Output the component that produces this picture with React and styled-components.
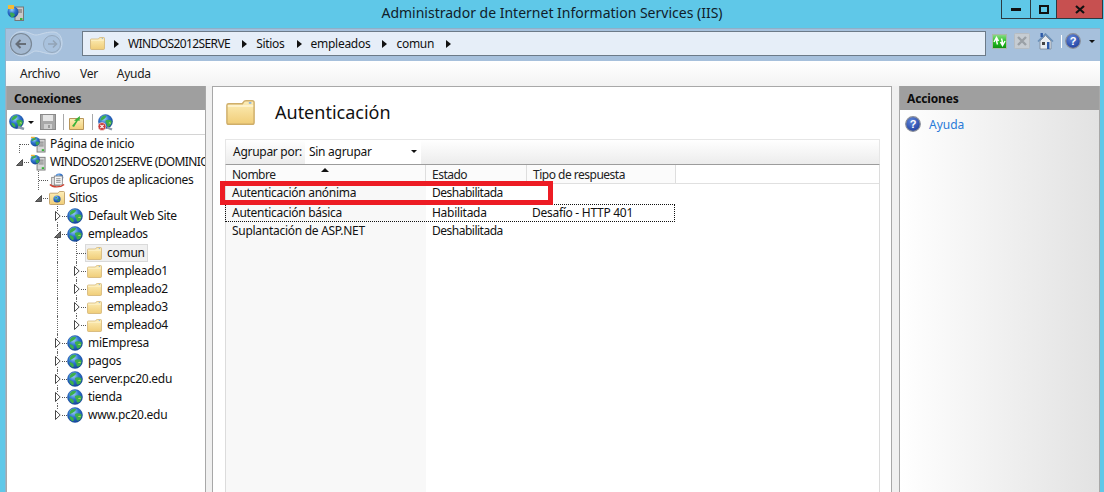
import React from 'react';
import styled, { createGlobalStyle } from 'styled-components';

const Global = createGlobalStyle`
  html, body { margin: 0; height: 492px; overflow: hidden; background: #5fc8e8; }
  #root { height: 492px; }
  * { box-sizing: border-box; }
  body { font-family: "Noto Sans", "Open Sans", sans-serif; font-size: 12px; letter-spacing: -.28px; color: #1a1a1a; }
`;

const Page = styled.div`display: flex; flex-direction: column; height: 492px; width: 1104px; overflow: hidden;`;
const TitleBar = styled.header`
  height: 28px; flex: none; display: flex; align-items: flex-start; position: relative;
  padding-left: 7px; padding-top: 4px;
`;
const TitleText = styled.div`
  position: absolute; left: 0; right: 0; top: 3px; text-align: center; font-size: 14px; line-height: 20px; color: #10202a; letter-spacing: 0;
`;
const WinButtons = styled.div`
  position: absolute; top: 0; left: 1001px; display: flex; height: 19px;
  border: 1px solid #2b3a42; border-top: 0;
`;
const WinBtn = styled.div`
  width: ${p => p.$w}px; height: 18px; display: flex; align-items: center; justify-content: center;
  background: ${p => p.$bg || 'transparent'}; border-left: ${p => p.$first ? 0 : '1px solid #2b3a42'};
`;
const Window = styled.div`
  flex: 1; min-height: 0; margin-left: 5px; width: 1095px; display: flex; flex-direction: column;
  background: #f0f0f0; border-left: 1px solid #8fb4cc;
`;
const NavBar = styled.div`
  height: 33px; flex: none; background: #a6c0dc; display: flex; align-items: flex-start; padding: 0 0 0 3px; border-top: 1px solid #8fb0c8;
`;
const Capsule = styled.div`
  width: 54px; height: 27px; flex: none; margin: 1px 19px 0 0; display: flex; align-items: center;
`;
const Address = styled.div`
  width: 904px; height: 25px; flex: none; margin-top: 2px; background: #e6eef8; border: 1px solid #6c7a88; display: flex; align-items: center; padding-left: 7px; color: #111;
`;
const Crumb = styled.span`margin-right: 12px; line-height: 16px; letter-spacing: ${p => p.$tight ? '-.6px' : 'inherit'};`;
const CrumbArrow = styled.span`
  width: 0; height: 0; border-left: 5px solid #111; border-top: 4px solid transparent; border-bottom: 4px solid transparent; margin-right: 9px; margin-left: ${p => p.$ml || 0}px;
`;
const NavIcons = styled.div`display: flex; align-items: center; margin: 4px 0 0 6px; height: 16px;`;
const NavGap = styled.span`width: 7px; flex: none;`;
const NavSep = styled.span`width: 1px; height: 13px; background: #fff; margin: 0 3px 0 7px;`;
const Caret = styled.span`
  width: 0; height: 0; flex: none; border-top: 3px solid #111; border-left: 3px solid transparent; border-right: 3px solid transparent; margin-left: ${p => p.$ml || 0}px;
`;
const MenuBar = styled.nav`
  height: 25px; flex: none; background: linear-gradient(#ffffff, #f3f3f3); display: flex; align-items: center; padding-left: 14px; gap: 19px;
`;
const MenuItem = styled.span`color: #1c1c1c; min-width: ${p => p.$w || 0}px;`;
const Panes = styled.div`flex: 1; min-height: 0; display: flex; padding-right: 1px;`;
const Side = styled.aside`
  width: ${p => p.$w}px; flex: none; margin-right: ${p => p.$mr || 0}px; display: flex; flex-direction: column; border-left: 1px solid #a8a8a8; border-right: 1px solid #a8a8a8;
  background: ${p => p.$bg || '#fff'};
`;
const PaneHead = styled.h2`
  margin: 0; height: 24px; flex: none; background: #9f9f9f; font-size: 12px; font-weight: 700; line-height: 26px; padding-left: 7px; color: #0c0c0c; letter-spacing: -.15px;
`;
const SideTools = styled.div`
  height: 25px; flex: none; display: flex; align-items: center; padding-left: 2px; border-bottom: 1px solid #d4d4d4;
`;
const ToolGap = styled.span`width: 6px; flex: none;`;
const ToolSep = styled.span`width: 1px; height: 16px; background: #a9a9a9; margin: 0 ${p => p.$r}px 0 ${p => p.$l}px;`;
const Tree = styled.div`display: flex; flex-direction: column; flex: 1;`;
const Row = styled.div`
  height: 18px; flex: none; display: flex; align-items: center; position: relative; padding-left: ${p => 3 + p.$d * 19}px;
  margin-top: ${p => p.$mt || 0}px;
`;
const Slot = styled.span`width: 19px; flex: none; height: 18px; position: relative; display: flex; align-items: center; justify-content: center;`;
const HDots = styled.span`position: absolute; left: 50%; right: 0; top: 9px; border-top: 1px dotted #555;`;
const Guide = styled.span`
  position: absolute; left: ${p => p.$x}px; top: ${p => p.$t}px; bottom: ${p => p.$b}px; border-left: 1px dotted #666;
`;
const ArrowBox = styled.span`position: relative; z-index: 1; display: flex; background: #fff;`;
const RowIcon = styled.span`width: 17px; height: 17px; flex: none; display: flex; align-items: center; justify-content: flex-start; padding-left: ${p => p.$flush ? 0 : 1}px; position: relative; z-index: 1;`;
const RowText = styled.span`margin-left: 4px; white-space: nowrap; line-height: 16px; color: #111; position: relative; letter-spacing: ${p => p.$tight ? '-.6px' : 'inherit'};`;
const SelBox = styled.span`
  position: absolute; left: 78px; top: 0; width: 63px; height: 18px; background: #f0f0f0; border: 1px solid #dadada;
`;
const TreeClip = styled.div`overflow: hidden; flex: 1; display: flex; flex-direction: column;`;
const Center = styled.main`
  width: 680px; flex: none; margin-right: 7px; background: #fff; border: 1px solid #a8a8a8; border-bottom: 0; padding: 0 10px 0 12px; display: flex; flex-direction: column; position: relative;
`;
const Heading = styled.div`height: 52px; flex: none; display: flex; align-items: center; padding: 0 0 2px 1px; gap: 20px;`;
const HeadingText = styled.h1`margin: 0; font-size: 18px; font-weight: 400; line-height: 24px; color: #111; letter-spacing: 0;`;
const Filter = styled.div`
  height: 26px; flex: none; background: linear-gradient(#fff, #ececec); border: 1px solid #e6e6e6; border-bottom: 1px solid #9c9c9c; display: flex; align-items: center; padding: 0 0 0 7px; width: 655px;
`;
const FilterLabel = styled.span`color: #111; width: 72px; flex: none; white-space: nowrap; margin-top: -2px;`;
const Drop = styled.div`
  width: 116px; height: 24px; background: #fff; display: flex; align-items: center; justify-content: space-between; padding: 0 4px 2px 4px; color: #111;
`;
const Grid = styled.div`flex: 1; width: 655px; border-left: 1px solid #dcdcdc; border-right: 1px solid #dcdcdc; position: relative; background: linear-gradient(90deg, #f8f8f8 200px, #fff 200px);`;
const HeadRow = styled.div`display: flex; height: 19px; border-bottom: 1px solid #e0e0e0; background: #fff;`;
const HeadCell = styled.div`
  width: ${p => p.$w}px; flex: none; background: #fbfbfb; border-right: 1px solid #dedede; padding: 2px 0 0 6px; line-height: 16px; color: #222; position: relative; letter-spacing: -.5px;
`;
const SortUp = styled.span`
  position: absolute; left: 95px; top: 3px; border-bottom: 4px solid #111; border-left: 4px solid transparent; border-right: 4px solid transparent;
`;
const DataRow = styled.div`
  display: flex; height: ${p => p.$h}px; width: 450px; align-items: center; color: #111;
  border: 1px dotted ${p => p.$focus ? '#111' : 'transparent'};
  margin-left: -1px; padding-bottom: ${p => p.$pb || 0}px;
`;
const Cell = styled.div`width: ${p => p.$w}px; flex: none; padding-left: 6px; line-height: 16px; letter-spacing: ${p => p.$tight ? '-.5px' : 'inherit'};`;
const Highlight = styled.div`
  position: absolute; left: -6px; top: 16px; width: 333px; height: 24px; border: 5px solid #ed1c24; z-index: 3;
`;
const ActionRow = styled.div`display: flex; align-items: center; height: 28px; padding-left: 5px; gap: 8px; color: #2a7ad8; letter-spacing: 0;`;

const Defs = () => (
  <svg width="0" height="0" style={{ position: 'absolute' }}>
    <defs>
      <linearGradient id="fold" x1="0" y1="0" x2="0" y2="1">
        <stop offset="0" stopColor="#fdeeb8" /><stop offset="1" stopColor="#f0cd78" />
      </linearGradient>
      <radialGradient id="glob" cx=".4" cy=".3" r=".75">
        <stop offset="0" stopColor="#9fd0f8" /><stop offset=".45" stopColor="#2f74d0" /><stop offset="1" stopColor="#123f92" />
      </radialGradient>
      <radialGradient id="helpG" cx=".4" cy=".3" r=".8">
        <stop offset="0" stopColor="#5f86da" /><stop offset="1" stopColor="#1b3a9a" />
      </radialGradient>
      <linearGradient id="grn" x1="0" y1="0" x2="0" y2="1">
        <stop offset="0" stopColor="#8fdc8c" /><stop offset=".5" stopColor="#27c222" /><stop offset="1" stopColor="#0d8f10" />
      </linearGradient>
    </defs>
  </svg>
);

const Folder = ({ s = 15, h = 13 }) => (
  <svg width={s} height={h} viewBox="0 0 16 14">
    <path d="M.5 3V12.5Q.5 13.5 1.5 13.5H14.5Q15.5 13.5 15.5 12.5V1.5Q15.5.5 14.5.5H11Q10 .5 9.5 1.5L9 2.2H1.5Q.5 2.2.5 3Z" fill="url(#fold)" stroke="#cfae6a" strokeWidth=".8" />
    <path d="M1 3.4H15" stroke="#fff6d8" strokeWidth=".8" />
    <rect x="12.6" y="1.2" width="1.4" height="1" fill="#8fb6e0" />
  </svg>
);
const Land = () => (
  <path d="M4.5 2.6C6 1.6 8 1.4 9 2.2 9 3.6 7.6 4 7 5 6 6 4.4 6 3 7.2 2.2 6 3.2 3.6 4.5 2.6ZM8 7C9.6 5.8 12.4 6 14.6 7.4 15 10 13.4 12.6 11.4 13.6 10 14 9.4 12.4 9.4 10.8 8.8 9.6 7.6 8.4 8 7ZM2.4 9.4C4 9 5.8 10 6.6 11.6 7 13.2 6.6 14.4 5.8 14.4 3.8 13.4 2.6 11.4 2.4 9.4Z" fill="#3cb04a" />
);
const Globe = ({ s = 16 }) => (
  <svg width={s} height={s} viewBox="0 0 16 16">
    <circle cx="8" cy="8" r="7.6" fill="url(#glob)" />
    <Land />
    <path d="M11.5 9.5C12.5 9.2 13.4 9.4 13.6 10" stroke="#e4e27a" strokeWidth="1" fill="none" />
    <circle cx="8" cy="8" r="7.4" fill="none" stroke="#164a9c" strokeWidth=".5" />
  </svg>
);
const ServerGlobe = () => (
  <svg width="17" height="17" viewBox="0 0 17 17">
    <rect x="7.5" y="3" width="8.5" height="13.5" fill="#d6d6d6" stroke="#7c7c7c" />
    <path d="M9 6H14.5M9 8H14.5M9 10H14.5" stroke="#7c7c7c" />
    <rect x="12.5" y="13.5" width="2.5" height="2" fill="#38b33a" />
    <circle cx="5.5" cy="5.5" r="5" fill="url(#glob)" />
    <path d="M3 2C5 .8 7 1.5 7 2.5 6 4 4 4 2 5 1 4 2 3 3 2ZM6 5.5C7.5 5 9 5.5 10 6.5 9.5 8.5 8 10 7 9.5 6.5 8 5.5 7 6 5.5Z" fill="#3aa655" />
    <path d="M1 1H5" stroke="#f2b632" strokeWidth="1.4" />
  </svg>
);
const AppPool = () => (
  <svg width="18" height="17" viewBox="0 0 18 17">
    <circle cx="11.5" cy="5" r="4.5" fill="url(#glob)" />
    <rect x="3" y="5" width="9" height="9" fill="#e8e8e8" stroke="#8a8a8a" />
    <rect x="6" y="3.5" width="9" height="10" fill="#f6f6f6" stroke="#8a8a8a" />
    <path d="M8 6.5H13M8 8.5H13M8 10.5H13" stroke="#8a8a8a" />
    <path d="M1 13C4 16.5 13 16.5 17 13" fill="none" stroke="#d04030" strokeWidth="1.5" />
  </svg>
);
const SitesFolder = () => (
  <svg width="16" height="14" viewBox="0 0 16 14">
    <path d="M.5 3V12.5Q.5 13.5 1.5 13.5H14.5Q15.5 13.5 15.5 12.5V1.5Q15.5.5 14.5.5H11Q10 .5 9.5 1.5L9 2.2H1.5Q.5 2.2.5 3Z" fill="url(#fold)" stroke="#b8965a" strokeWidth=".8" />
    <circle cx="8" cy="8" r="3.6" fill="url(#glob)" />
    <path d="M6 6.5C7 5.5 8.5 6 8 7 7 8 6 7.5 6 6.5ZM8.5 8.5C9.5 8 11 8.5 10.5 9.8 9.5 11 8.5 10 8.5 8.5Z" fill="#3aa655" />
  </svg>
);
const OpenArrow = () => (
  <svg width="7" height="7" viewBox="0 0 7 7"><path d="M6.5.5V6.5H.5Z" fill="#6a6a6a" stroke="#333" strokeWidth=".8" /></svg>
);
const ClosedArrow = () => (
  <svg width="6" height="10" viewBox="0 0 6 10"><path d="M.5.5 5.2 5 .5 9.5Z" fill="#fff" stroke="#333" strokeWidth=".9" /></svg>
);
const Help = ({ s = 16 }) => (
  <svg width={s} height={s} viewBox="0 0 16 16">
    <circle cx="8" cy="8" r="7.3" fill="url(#helpG)" stroke="#8b8f99" strokeWidth="1.2" />
    <text x="8" y="12" textAnchor="middle" fontSize="11" fontWeight="700" fontFamily="Liberation Sans, sans-serif" fill="#fff">?</text>
  </svg>
);
const Back = () => (
  <svg width="54" height="27" viewBox="0 0 54 27">
    <path d="M13 1.5C20 1.5 23 5 27 5 31 5 36 2 44 2 50 2 53 7 53 13 53 20 49 24 43 24 36 24 32 21 27 21 23 21 20 26 13 26 6 26 1 20 1 13.5 1 7 6 1.5 13 1.5Z" fill="#b0c8e2" stroke="#c8d8ea" />
    <circle cx="12" cy="14" r="10.5" fill="#a4b9d1" stroke="#7a8896" strokeWidth="1.2" />
    <path d="M17 14H8M11.5 10 7.5 14 11.5 18" fill="none" stroke="#666e78" strokeWidth="2" />
    <circle cx="43" cy="14" r="8.5" fill="#a9c2dd" stroke="#95a8bc" />
    <path d="M39 14H47M44 10.5 47.5 14 44 17.5" fill="none" stroke="#93a4b6" strokeWidth="1.6" />
  </svg>
);
const Refresh = () => (
  <svg width="15" height="15" viewBox="0 0 15 15">
    <rect x=".5" y=".5" width="14" height="14" fill="url(#grn)" stroke="#a8b8a8" />
    <path d="M2 8 4.5 3.5 6.5 7M13 7 10.5 11.5 8.5 8M4.5 4.5Q4.5 8 5.5 10.5M10.5 10.5Q10.5 7 9.5 4.5" fill="none" stroke="#fff" strokeWidth="1.5" />
  </svg>
);
const Stop = () => (
  <svg width="16" height="16" viewBox="0 0 16 16">
    <rect x=".5" y=".5" width="15" height="15" rx="1" fill="#c6ccd2" stroke="#b6bcc2" />
    <path d="M4 4 12 12M12 4 4 12" stroke="#9aa0a6" strokeWidth="2.4" />
  </svg>
);
const Home = () => (
  <svg width="17" height="17" viewBox="0 0 17 17">
    <path d="M3 8 8.5 2.5 14 8V16H3Z" fill="#e8ecf0" stroke="#7c8692" strokeWidth=".8" />
    <path d="M1 8.5 8.5 1 16 8.5" fill="none" stroke="#6a8fb8" strokeWidth="1.6" />
    <rect x="3.5" y="0" width="2.4" height="4" fill="#2d5aa8" />
    <rect x="5" y="9" width="3" height="3" fill="#444" />
    <rect x="10" y="9" width="2.5" height="7" fill="#2d5aa8" />
  </svg>
);
const SaveIcon = () => (
  <svg width="16" height="16" viewBox="0 0 16 16">
    <rect x=".5" y=".5" width="15" height="15" fill="#a8a8a8" stroke="#8a8a8a" />
    <rect x="3" y="1" width="10" height="6" fill="#e6e6e6" />
    <rect x="4" y="10" width="8" height="5" fill="#cfcfcf" />
    <rect x="8" y="11" width="2" height="3" fill="#9a9a9a" />
  </svg>
);
const UpFolder = () => (
  <svg width="15" height="15" viewBox="0 0 15 15">
    <path d="M.5 3.5H14.5V14.5H.5Z" fill="url(#fold)" stroke="#b8965a" />
    <path d="M3 11 7 6 5 5.5 11 1 10.5 6 9 5.5 5 12Z" fill="#3bb23b" />
  </svg>
);
const GlobeX = () => (
  <svg width="17" height="17" viewBox="0 0 17 17">
    <g transform="translate(1 0)"><Globe s={15} /></g>
    <path d="M10 13.5 15 15.5" stroke="#8a9aaa" strokeWidth="2.4" />
    <circle cx="5" cy="12.5" r="4" fill="#c73a3a" stroke="#fff" strokeWidth=".6" />
    <path d="M3.4 10.9 6.6 14.1M6.6 10.9 3.4 14.1" stroke="#fff" strokeWidth="1.2" />
  </svg>
);
const GlobeTool = () => (
  <svg width="16" height="16" viewBox="0 0 16 16">
    <Globe s={15} />
    <path d="M9 13 15 15" stroke="#8a9aaa" strokeWidth="2.4" />
  </svg>
);
const TitleIcon = () => (
  <svg width="17" height="17" viewBox="0 0 17 17">
    <rect x="8" y="3" width="8.5" height="13.5" fill="#c8c8c8" stroke="#777" />
    <path d="M10 6H15M10 8H15" stroke="#666" />
    <rect x="13" y="14" width="2.5" height="2" fill="#38b33a" />
    <circle cx="6" cy="8" r="5.5" fill="url(#glob)" />
    <path d="M1 1H7V5H1Z" fill="#f3bb38" />
    <path d="M3 9C5 8 7 9 8 11 7 13 5 13.5 4 13 3.5 12 3 10 3 9Z" fill="#3aa655" />
  </svg>
);

const rows = [
  { d: 0, icon: <ServerGlobe />, text: 'Página de inicio', dots: true },
  { d: 0, icon: <ServerGlobe />, text: 'WINDOS2012SERVE (DOMINIO', open: true, tight: true },
  { d: 1, icon: <AppPool />, text: 'Grupos de aplicaciones', dots: true },
  { d: 1, icon: <SitesFolder />, text: 'Sitios', open: true },
  { d: 2, icon: <Globe />, text: 'Default Web Site', closed: true, flush: true },
  { d: 2, icon: <Globe />, text: 'empleados', open: true, flush: true },
  { d: 3, icon: <Folder />, text: 'comun', dots: true, sel: true, mt: 1 },
  { d: 3, icon: <Folder />, text: 'empleado1', closed: true },
  { d: 3, icon: <Folder />, text: 'empleado2', closed: true },
  { d: 3, icon: <Folder />, text: 'empleado3', closed: true },
  { d: 3, icon: <Folder />, text: 'empleado4', closed: true },
  { d: 2, icon: <Globe />, text: 'miEmpresa', closed: true, flush: true },
  { d: 2, icon: <Globe />, text: 'pagos', closed: true, flush: true },
  { d: 2, icon: <Globe />, text: 'server.pc20.edu', closed: true, flush: true },
  { d: 2, icon: <Globe />, text: 'tienda', closed: true, flush: true },
  { d: 2, icon: <Globe />, text: 'www.pc20.edu', closed: true, flush: true },
];

export default function App() {
  return (
    <Page>
      <Global />
      <Defs />
      <TitleBar>
        <TitleIcon />
        <TitleText>Administrador de Internet Information Services (IIS)</TitleText>
        <WinButtons>
          <WinBtn $w={28} $first><svg width="10" height="4"><rect width="10" height="3" y="1" fill="#111" /></svg></WinBtn>
          <WinBtn $w={26}><svg width="10" height="9"><rect x="1" y="1" width="8" height="7" fill="none" stroke="#111" strokeWidth="2" /></svg></WinBtn>
          <WinBtn $w={46} $bg="#c75050"><svg width="10" height="9" viewBox="0 0 10 9"><path d="M1 1 9 8M9 1 1 8" stroke="#111" strokeWidth="2.2" /></svg></WinBtn>
        </WinButtons>
      </TitleBar>
      <Window>
        <NavBar>
          <Capsule><Back /></Capsule>
          <Address>
            <Folder />
            <CrumbArrow $ml={9} />
            <Crumb $tight>WINDOS2012SERVE</Crumb>
            <CrumbArrow />
            <Crumb>Sitios</Crumb>
            <CrumbArrow />
            <Crumb>empleados</Crumb>
            <CrumbArrow />
            <Crumb>comun</Crumb>
            <CrumbArrow />
          </Address>
          <NavIcons>
            <Refresh />
            <NavGap />
            <Stop />
            <NavGap />
            <Home />
            <NavSep />
            <Help />
            <Caret $ml={8} />
          </NavIcons>
        </NavBar>
        <MenuBar>
          <MenuItem $w={41}>Archivo</MenuItem>
          <MenuItem>Ver</MenuItem>
          <MenuItem>Ayuda</MenuItem>
        </MenuBar>
        <Panes>
          <Side $w={200} $mr={6}>
            <PaneHead>Conexiones</PaneHead>
            <SideTools>
              <GlobeTool />
              <Caret $ml={3} />
              <ToolGap />
              <SaveIcon />
              <ToolSep $l={7} $r={5} />
              <UpFolder />
              <ToolSep $l={8} $r={4} />
              <GlobeX />
            </SideTools>
            <TreeClip>
              <Tree>
                {rows.map((r, i) => (
                  <Row key={i} $d={r.d} $mt={r.mt}>
                    {r.sel && <SelBox />}
                    {i === 0 && <Guide $x={12} $t={9} $b={0} />}
                    {i === 2 && <Guide $x={31} $t={-8} $b={-1} />}
                    {i >= 4 && <Guide $x={50} $t={i === 4 ? -8 : 0} $b={i === 15 ? 9 : 0} />}
                    {i >= 6 && i <= 10 && <Guide $x={69} $t={i === 6 ? -8 : 0} $b={i === 10 ? 9 : 0} />}
                    <Slot>
                      {(r.dots || r.closed || r.open) && <HDots />}
                      {r.open && <ArrowBox><OpenArrow /></ArrowBox>}
                      {r.closed && <ArrowBox><ClosedArrow /></ArrowBox>}
                    </Slot>
                    <RowIcon $flush={r.flush}>{r.icon}</RowIcon>
                    <RowText $tight={r.tight}>{r.text}</RowText>
                  </Row>
                ))}
              </Tree>
            </TreeClip>
          </Side>
          <Center>
            <Heading>
              <Folder s={29} h={27} />
              <HeadingText>Autenticación</HeadingText>
            </Heading>
            <Filter>
              <FilterLabel>Agrupar por:</FilterLabel>
              <Drop>Sin agrupar<Caret /></Drop>
            </Filter>
            <Grid>
              <HeadRow>
                <HeadCell $w={200}>Nombre<SortUp /></HeadCell>
                <HeadCell $w={101}>Estado</HeadCell>
                <HeadCell $w={149}>Tipo de respuesta</HeadCell>
              </HeadRow>
              <DataRow $h={20} $pb={2}><Cell $w={200}>Autenticación anónima</Cell><Cell $w={100} $tight>Deshabilitada</Cell></DataRow>
              <DataRow $h={18} $pb={1} $focus><Cell $w={200}>Autenticación básica</Cell><Cell $w={100}>Habilitada</Cell><Cell $w={148}>Desafío - HTTP 401</Cell></DataRow>
              <DataRow $h={18}><Cell $w={200}>Suplantación de ASP.NET</Cell><Cell $w={100} $tight>Deshabilitada</Cell></DataRow>
              <Highlight />
            </Grid>
          </Center>
          <Side $w={201} $bg="linear-gradient(90deg, #fff, #e2e2e2)">
            <PaneHead>Acciones</PaneHead>
            <ActionRow><Help /><span>Ayuda</span></ActionRow>
          </Side>
        </Panes>
      </Window>
    </Page>
  );
}
